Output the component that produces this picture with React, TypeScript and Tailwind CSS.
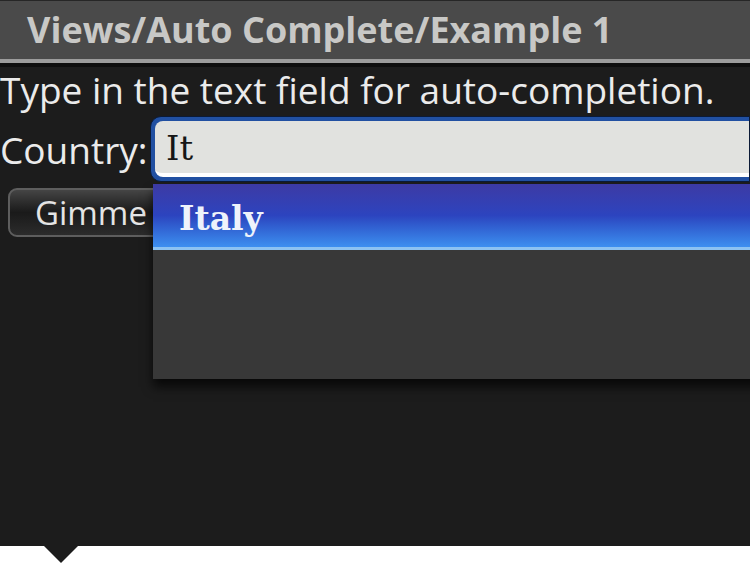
export default function App() {
  return (
    <div className="relative w-[750px] h-[563px] overflow-hidden bg-white font-['Open_Sans',sans-serif]">
      {/* device screen */}
      <div className="flex h-[546px] flex-col bg-[#1c1c1c]">
        {/* title bar */}
        <div className="flex h-[59px] items-center border-t border-[#262626] bg-[#4a4a4a] pl-[27px]">
          <span className="whitespace-nowrap text-[36px] font-bold leading-none text-[#c8c8c6]">Views/Auto Complete/Example 1</span>
        </div>
        <div className="h-[4px] bg-[#9c9c9c]" />
        <div className="h-[4px] bg-[#0e0e0e]" />

        <p className="h-[46px] whitespace-nowrap text-[37px] leading-[46px] text-[#ebebeb]">
          Type in the text field for auto-completion.
        </p>

        {/* country row */}
        <div className="mt-[3px] flex h-[66px] items-center">
          <span className="w-[150px] shrink-0 whitespace-nowrap text-[37px] leading-none text-[#ebebeb]">Country:</span>
          <div className="h-[66px] flex-1 rounded-l-[11px] border border-[#0b1a36] bg-[#2150a2] p-[4px] pr-0">
            <div className="flex h-full items-center rounded-l-[8px] border-b-[4px] border-white bg-[#e1e2df] pl-[11px] pt-[2px]">
              <span className="font-['DejaVu_Serif',serif] text-[34px] leading-none text-[#161616]">It</span>
            </div>
          </div>
        </div>

        {/* button row */}
        <div className="mt-[6px] flex pl-[8px]">
          <div className="flex h-[49px] w-[190px] items-center rounded-[9px] border-2 border-[#5e5e5e] bg-gradient-to-b from-[#454545] via-[#1a1a1a] to-[#2c2c2c] pl-[25px]">
            <span className="text-[33px] leading-none text-[#e4e4e4]">Gimme</span>
          </div>
        </div>
      </div>

      {/* pointer under the screen */}
      <div className="ml-[44px] h-0 w-0 border-x-[17px] border-t-[17px] border-x-transparent border-t-[#1c1c1c]" />

      {/* suggestion popup */}
      <div className="absolute left-[153px] top-[184px] w-[620px] shadow-[0_8px_10px_rgba(0,0,0,0.7)]">
        <div className="flex h-[66px] items-center border-b-[3px] border-[#8cc2f2] bg-gradient-to-b from-[#3c3aa4] via-[#2c44bf] to-[#3d8ff0] pl-[26px] pt-[6px]">
          <span className="font-['DejaVu_Serif',serif] text-[33px] font-bold leading-none text-[#eef3fb]">Italy</span>
        </div>
        <div className="h-[129px] bg-[#383838]" />
      </div>
    </div>
  );
}
